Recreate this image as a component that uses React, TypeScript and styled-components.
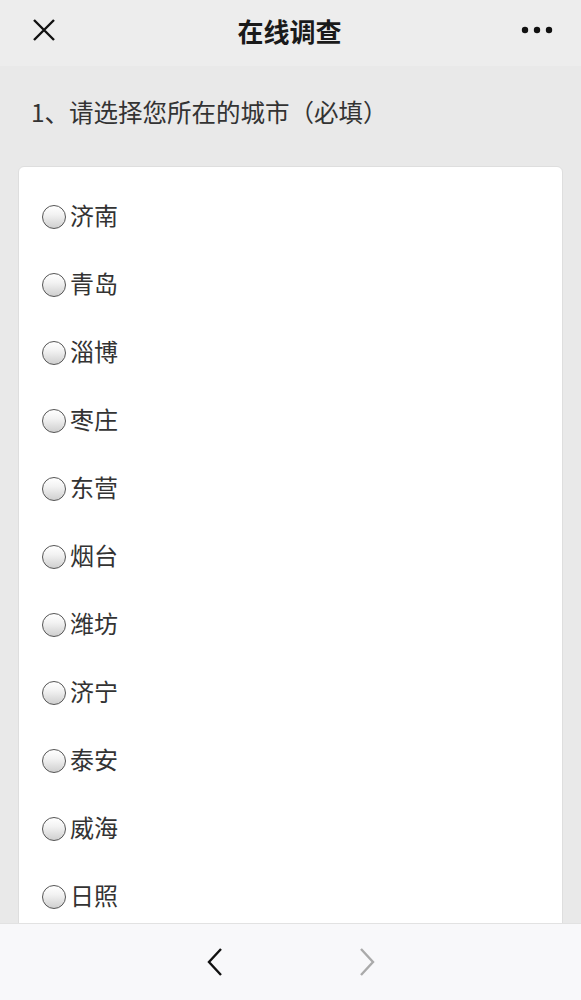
import React from 'react'
import styled, { createGlobalStyle } from 'styled-components'

const GlobalStyle = createGlobalStyle`
	html, body {
		margin: 0;
		padding: 0;
		background: #e9e9e9;
		font-family: "Noto Sans CJK SC", "Noto Sans", sans-serif;
	}
`

const cities = ['济南', '青岛', '淄博', '枣庄', '东营', '烟台', '潍坊', '济宁', '泰安', '威海', '日照']

export default function App() {
	return (
		<Page>
			<GlobalStyle />
			<Header>
				<IconSlot>
					<svg width="24" height="24" viewBox="0 0 24 24">
						<path d="M2 2 L22 22 M22 2 L2 22" stroke="#111" strokeWidth="2.4" fill="none" />
					</svg>
				</IconSlot>
				<Title>在线调查</Title>
				<IconSlot $right>
					<svg width="32" height="8" viewBox="0 0 32 8">
						<circle cx="4" cy="4" r="3.2" fill="#111" />
						<circle cx="16" cy="4" r="3.2" fill="#111" />
						<circle cx="28" cy="4" r="3.2" fill="#111" />
					</svg>
				</IconSlot>
			</Header>
			<Body>
				<Question>1、请选择您所在的城市（必填）</Question>
				<Card>
					{cities.map((c) => (
						<Option key={c}>
							<Radio />
							<Label>{c}</Label>
						</Option>
					))}
				</Card>
			</Body>
			<Footer>
				<NavButton>
					<svg width="20" height="30" viewBox="0 0 20 30">
						<path d="M16 2 L4 15 L16 28" stroke="#111" strokeWidth="2.4" fill="none" />
					</svg>
				</NavButton>
				<NavButton>
					<svg width="20" height="30" viewBox="0 0 20 30">
						<path d="M4 2 L16 15 L4 28" stroke="#aaa" strokeWidth="2.4" fill="none" />
					</svg>
				</NavButton>
			</Footer>
		</Page>
	)
}

const Page = styled.div`
	width: 581px;
	height: 1000px;
	display: flex;
	flex-direction: column;
	overflow: hidden;
`

const Header = styled.div`
	height: 66px;
	flex-shrink: 0;
	background: #ededed;
	display: grid;
	grid-template-columns: 1fr auto 1fr;
	align-items: center;
	padding: 0 28px 6px 32px;
	box-sizing: border-box;
`

const IconSlot = styled.div<{ $right?: boolean }>`
	display: flex;
	align-items: center;
	justify-content: ${({ $right }) => ($right ? 'flex-end' : 'flex-start')};
`

const Title = styled.div`
	font-size: 26px;
	font-weight: 700;
	color: #1a1a1a;
	margin-right: 6px;
`

const Body = styled.div`
	flex: 1;
	overflow: hidden;
	background: #e9e9e9;
	padding: 0 18px 0 18px;
`

const Question = styled.div`
	font-size: 24.5px;
	color: #333;
	padding: 29px 0 0 13px;
	height: 100px;
	line-height: 34px;
	box-sizing: border-box;
`

const Card = styled.div`
	background: #fff;
	border-radius: 6px;
	border: 1px solid #dedede;
	padding: 15px 0 0 23px;
`

const Option = styled.div`
	height: 68px;
	display: flex;
	align-items: center;
	font-size: 24px;
	color: #333;
	gap: 4px;
`

const Label = styled.span`
	margin-top: -3px;
`

const Radio = styled.span`
	width: 24px;
	height: 24px;
	box-sizing: border-box;
	border-radius: 50%;
	border: 1.6px solid #555;
	background: linear-gradient(180deg, #ffffff 0%, #f2f2f2 40%, #cfcfcf 100%);
	flex-shrink: 0;
	margin-top: 1px;
`

const Footer = styled.div`
	height: 77px;
	flex-shrink: 0;
	background: #f8f8fa;
	border-top: 1px solid #e2e2e2;
	display: flex;
	align-items: center;
	justify-content: center;
	gap: 132px;
	box-sizing: border-box;
`

const NavButton = styled.div`
	width: 20px;
	height: 30px;
	display: flex;
`
